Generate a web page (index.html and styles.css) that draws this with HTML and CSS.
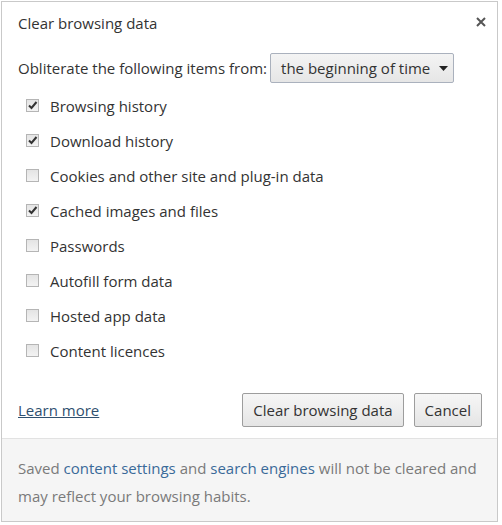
FILE: index.html
```html
<!DOCTYPE html>
<html>
<head>
<meta charset="utf-8">
<link rel="stylesheet" href="styles.css">
</head>
<body>
<div class="dialog">
  <div class="main">
    <div class="title-row">
      <div class="title">Clear browsing data</div>
      <div class="close">
        <svg width="10" height="10" viewBox="0 0 10 10"><path d="M1 1L9 9M9 1L1 9" stroke="#555" stroke-width="2"/></svg>
      </div>
    </div>
    <div class="period-row">
      <span>Obliterate the following items from:</span>
      <div class="select">
        <span>the beginning of time</span>
        <svg width="9" height="5" viewBox="0 0 9 5"><path d="M0 0H9L4.5 5Z" fill="#222"/></svg>
      </div>
    </div>
    <ul class="items">
      <li><span class="cb checked"><svg width="11" height="11" viewBox="0 0 11 11"><path d="M2 5.5L4.5 8L9.5 2" stroke="#333" stroke-width="2" fill="none"/></svg></span>Browsing history</li>
      <li><span class="cb checked"><svg width="11" height="11" viewBox="0 0 11 11"><path d="M2 5.5L4.5 8L9.5 2" stroke="#333" stroke-width="2" fill="none"/></svg></span>Download history</li>
      <li><span class="cb"></span>Cookies and other site and plug-in data</li>
      <li><span class="cb checked"><svg width="11" height="11" viewBox="0 0 11 11"><path d="M2 5.5L4.5 8L9.5 2" stroke="#333" stroke-width="2" fill="none"/></svg></span>Cached images and files</li>
      <li><span class="cb"></span>Passwords</li>
      <li><span class="cb"></span>Autofill form data</li>
      <li><span class="cb"></span>Hosted app data</li>
      <li><span class="cb"></span>Content licences</li>
    </ul>
    <div class="actions">
      <a class="learn" href="#">Learn more</a>
      <div class="buttons">
        <button class="btn">Clear browsing data</button>
        <button class="btn">Cancel</button>
      </div>
    </div>
  </div>
  <div class="footer">
    <p class="note">Saved <a href="#">content settings</a> and <a href="#">search engines</a> will not be cleared and<br>may reflect your browsing habits.</p>
  </div>
</div>
</body>
</html>
```
FILE: styles.css
```css
html, body {
  margin: 0;
  padding: 0;
  background: #fff;
}
body {
  font-family: "Open Sans", "Noto Sans", sans-serif;
  font-size: 15px;
  color: #333;
}
.dialog {
  margin: 1px 0 0 1px;
  width: 495px;
  height: 519px;
  border: 1px solid #c9c9c9;
  display: flex;
  flex-direction: column;
  background: #fff;
}
.main {
  flex: 1;
  padding: 0 15px 0 16px;
}
.title-row {
  display: flex;
  justify-content: space-between;
  align-items: flex-start;
  height: 42px;
}
.title {
  margin-top: 11px;
  font-size: 15px;
  color: #333;
}
.close {
  margin-top: 9px;
  margin-right: -4px;
}
.period-row {
  display: flex;
  align-items: center;
  gap: 3px;
  height: 30px;
  margin-top: 9px;
}
.select {
  display: flex;
  align-items: center;
  justify-content: space-between;
  width: 184px;
  height: 30px;
  box-sizing: border-box;
  padding: 0 5px 0 10px;
  border: 1px solid #aab1bd;
  border-radius: 2px;
  background: linear-gradient(#f4f4f4, #e6e6e6);
}
.items {
  list-style: none;
  margin: 5px 0 0 0;
  padding: 0;
}
.items li {
  display: flex;
  align-items: center;
  height: 35px;
  padding-left: 8px;
}
.cb {
  width: 11px;
  height: 11px;
  border: 1px solid #b5b5b5;
  background: linear-gradient(#e4e4e4, #f3f3f3);
  margin-right: 11px;
  display: flex;
  align-items: center;
  justify-content: center;
}
.cb svg {
  display: block;
}
.actions {
  display: flex;
  justify-content: space-between;
  align-items: center;
  margin-top: 25px;
}
.learn {
  color: #30506f;
  text-decoration: underline;
  font-size: 15px;
}
.buttons {
  display: flex;
  gap: 10px;
}
.btn {
  font-family: inherit;
  font-size: 15px;
  color: #333;
  height: 34px;
  padding: 0 10px;
  border: 1px solid #9d9d9d;
  border-radius: 2px;
  background: linear-gradient(#f6f6f6, #e5e5e5);
}
.footer {
  height: 83px;
  box-sizing: border-box;
  background: #f5f5f5;
  border-top: 1px solid #e2e2e2;
  padding: 15px 16px 0 16px;
}
.note {
  margin: 0;
  color: #7a7a7a;
  font-size: 15px;
  line-height: 28px;
}
.note a {
  color: #3a6a99;
  text-decoration: none;
}
```
